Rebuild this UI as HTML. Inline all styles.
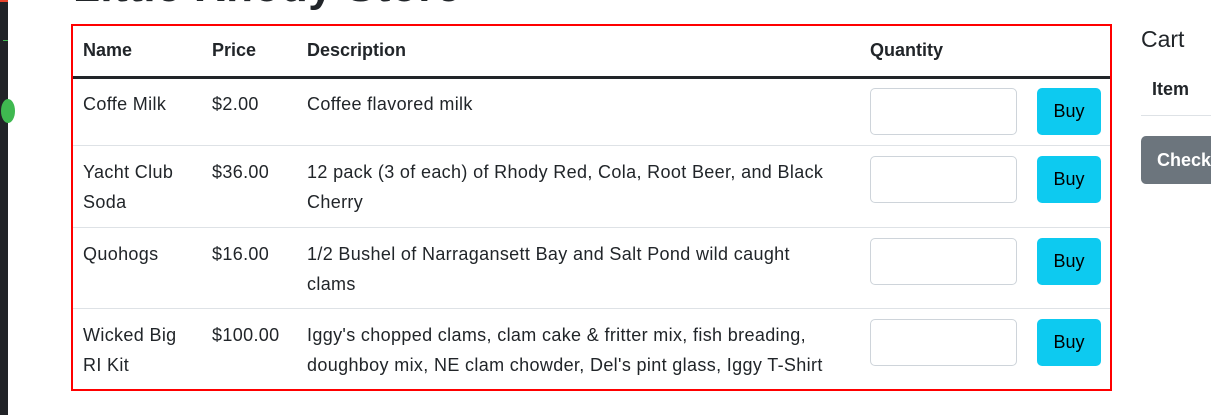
<!DOCTYPE html>
<html><head><meta charset="utf-8"><style>
html,body{margin:0;padding:0;width:1211px;height:415px;overflow:hidden;background:#fff;font-family:"Liberation Sans",sans-serif;color:#212529;position:relative}
.side{position:absolute;left:0;top:0;width:8px;height:415px;background:#212327}
.side .a{position:absolute;left:0;top:0;width:8px;height:2px;background:#e8452c}
.side .b{position:absolute;left:3px;top:40px;width:5px;height:1px;background:#3fb950}
.side .c{position:absolute;left:1px;top:99px;width:14px;height:24px;border-radius:50%;background:#3fb950}
.title{position:absolute;left:73px;top:-38px;font-size:44px;font-weight:bold;color:#212529;white-space:nowrap;letter-spacing:0.5px}
.tbl{position:absolute;left:71px;top:24px;width:1037px;height:363px;border:2px solid #f00}
.cell{position:absolute;font-size:18px;line-height:30px;letter-spacing:0.35px;white-space:nowrap}
.hd{font-weight:bold;top:9px;letter-spacing:0}
.thick{position:absolute;left:0;right:0;top:50px;height:3px;background:#212529}
.sep{position:absolute;left:0;right:0;height:1px;background:#dee2e6}
.inp{position:absolute;left:797px;width:145px;height:45px;border:1px solid #ced4da;border-radius:5px;background:#fff}
.buy{position:absolute;left:964px;width:64px;height:47px;border-radius:5px;background:#0dcaf0;color:#000;font-size:18px;line-height:47px;text-align:center}
</style></head><body>
<div class="side"><div class="a"></div><div class="b"></div><div class="c"></div></div>
<div class="title">Little Rhody Store</div>
<div class="tbl">
<div class="cell hd" style="left:10px">Name</div>
<div class="cell hd" style="left:139px">Price</div>
<div class="cell hd" style="left:234px">Description</div>
<div class="cell hd" style="left:797px">Quantity</div>
<div class="thick"></div>

<div class="cell" style="left:10px;top:63px">Coffe Milk</div>
<div class="cell" style="left:139px;top:63px">$2.00</div>
<div class="cell" style="left:234px;top:63px">Coffee flavored milk</div>
<div class="inp" style="top:62px"></div><div class="buy" style="top:62px">Buy</div>
<div class="sep" style="top:119px"></div>

<div class="cell" style="left:10px;top:131px">Yacht Club<br>Soda</div>
<div class="cell" style="left:139px;top:131px">$36.00</div>
<div class="cell" style="left:234px;top:131px">12 pack (3 of each) of Rhody Red, Cola, Root Beer, and Black<br>Cherry</div>
<div class="inp" style="top:130px"></div><div class="buy" style="top:130px">Buy</div>
<div class="sep" style="top:201px"></div>

<div class="cell" style="left:10px;top:213px">Quohogs</div>
<div class="cell" style="left:139px;top:213px">$16.00</div>
<div class="cell" style="left:234px;top:213px">1/2 Bushel of Narragansett Bay and Salt Pond wild caught<br>clams</div>
<div class="inp" style="top:212px"></div><div class="buy" style="top:212px">Buy</div>
<div class="sep" style="top:282px"></div>

<div class="cell" style="left:10px;top:294px">Wicked Big<br>RI Kit</div>
<div class="cell" style="left:139px;top:294px">$100.00</div>
<div class="cell" style="left:234px;top:294px">Iggy's chopped clams, clam cake &amp; fritter mix, fish breading,<br>doughboy mix, NE clam chowder, Del's pint glass, Iggy T-Shirt</div>
<div class="inp" style="top:293px"></div><div class="buy" style="top:293px">Buy</div>
</div>

<div style="position:absolute;left:1141px;top:26px;font-size:23px;color:#212529">Cart</div>
<div style="position:absolute;left:1152px;top:79px;font-size:18px;font-weight:bold">Item</div>
<div style="position:absolute;left:1141px;top:115px;width:70px;height:1px;background:#dee2e6"></div>
<div style="position:absolute;left:1141px;top:136px;width:90px;height:48px;border-radius:5px;background:#6c757d;color:#fff;font-size:18px;font-weight:bold;line-height:48px;padding-left:16px;box-sizing:border-box;white-space:nowrap">Checkout</div>
</body></html>
